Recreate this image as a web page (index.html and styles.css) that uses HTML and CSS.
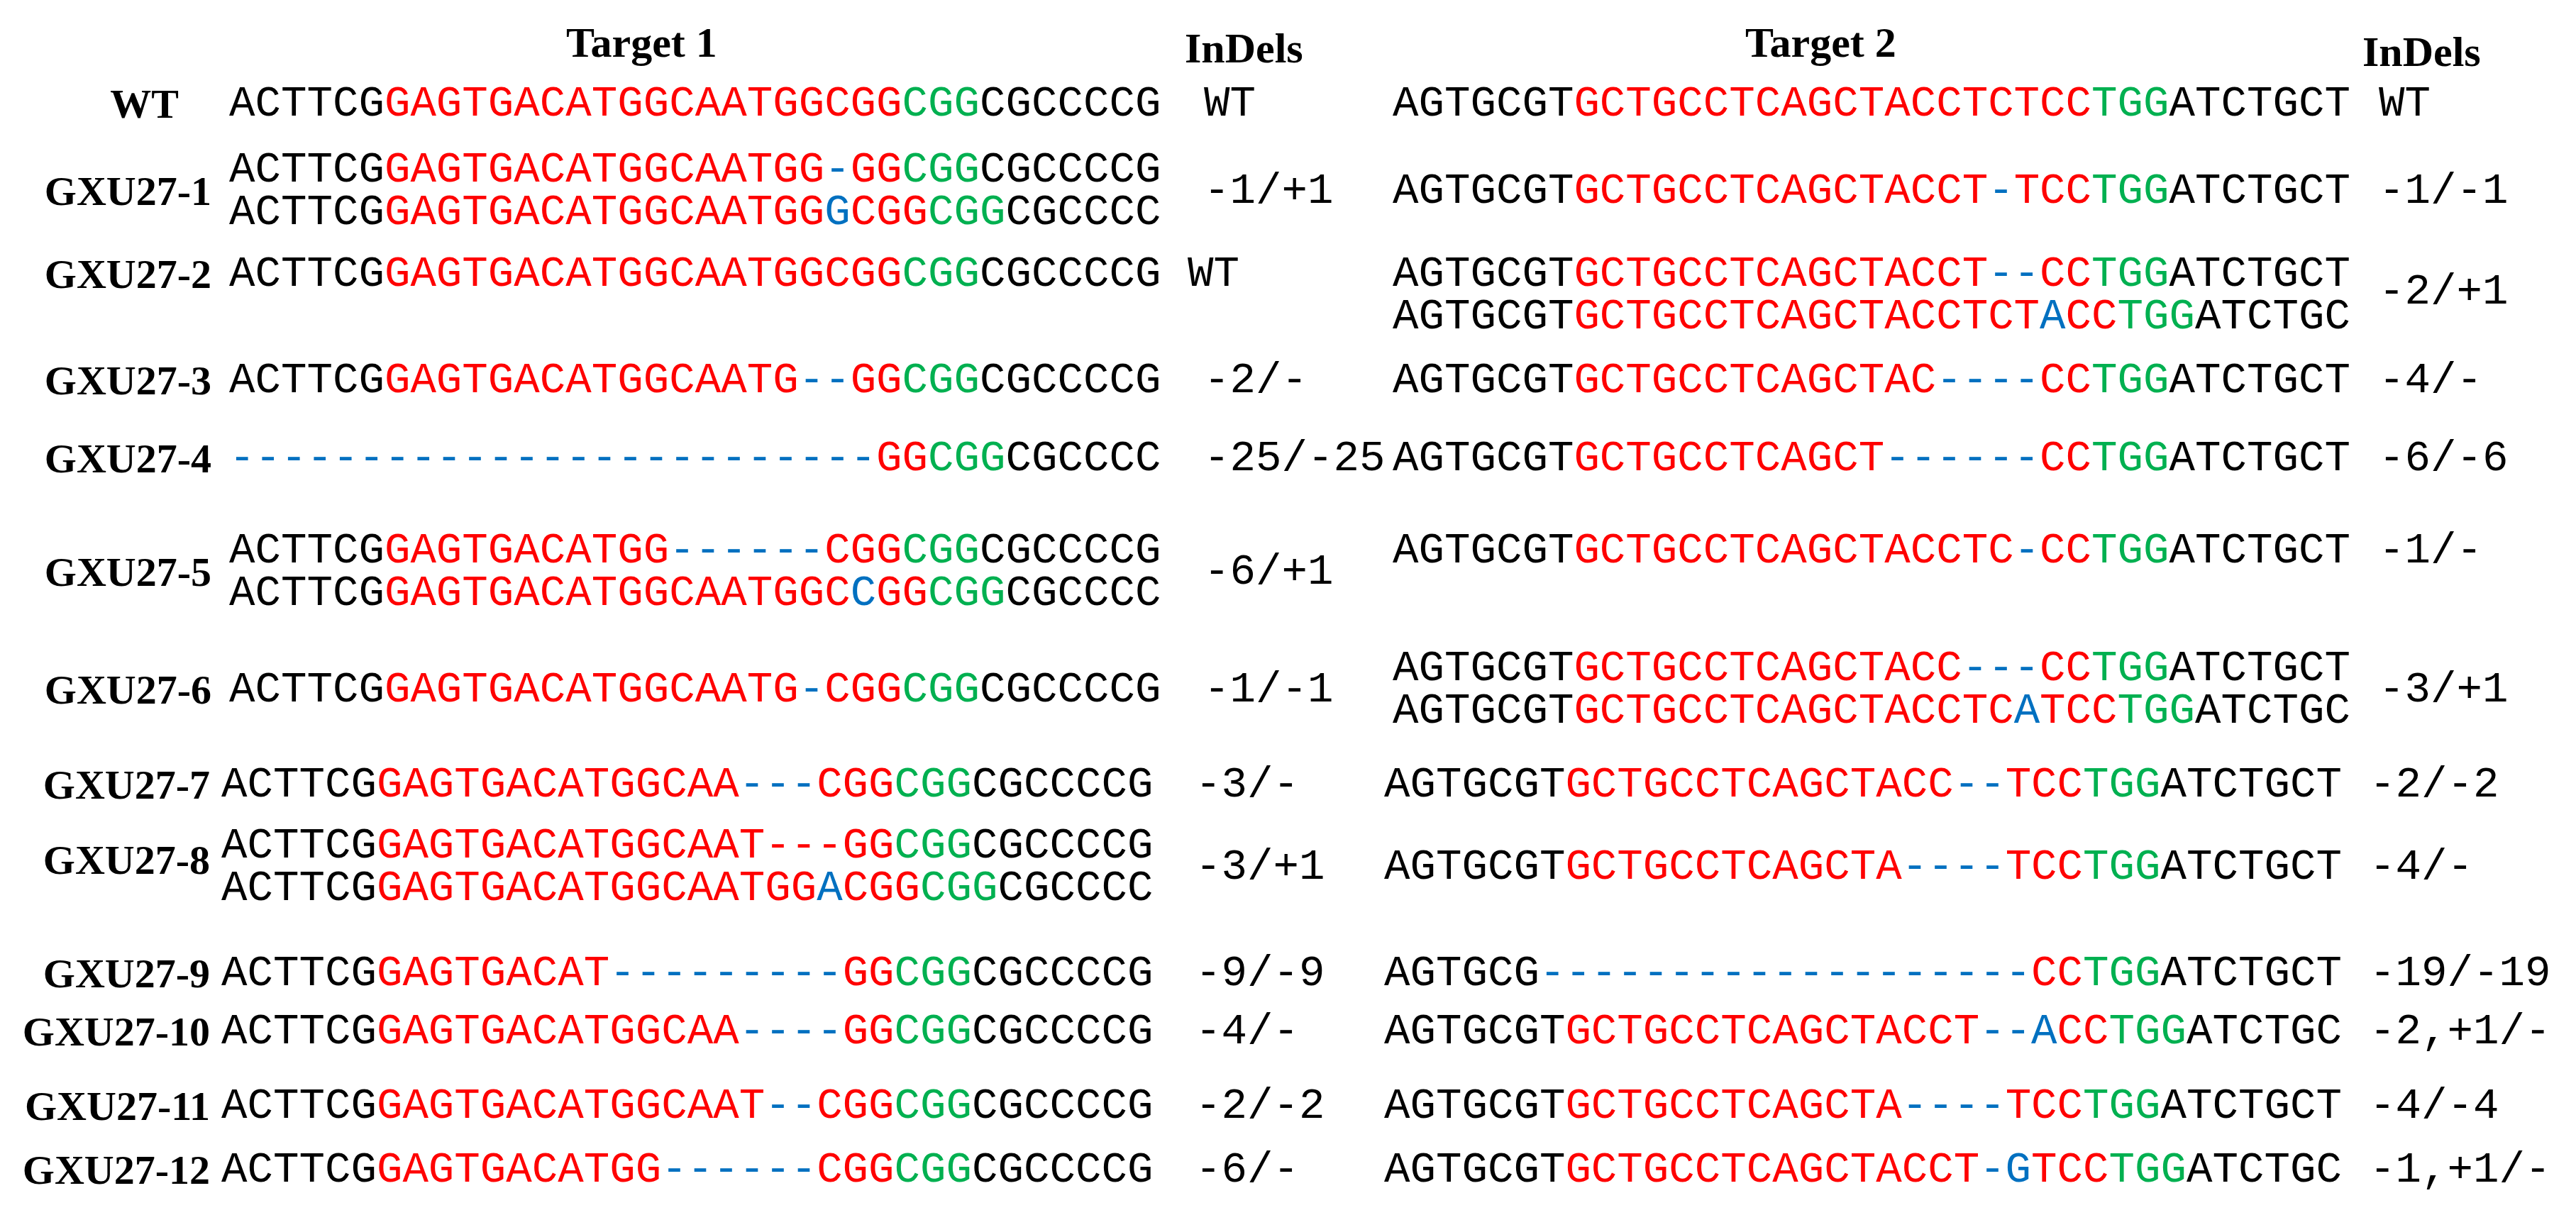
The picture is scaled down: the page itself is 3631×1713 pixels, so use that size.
FILE: index.html
```html
<!DOCTYPE html>
<html lang="en">
<head>
<meta charset="utf-8">
<title>InDels at Target 1 and Target 2</title>
<link rel="stylesheet" href="styles.css">
</head>
<body>
<div class="fig">
  <div class="head">
    <div class="h-t1">Target 1</div>
    <div class="h-in1">InDels</div>
    <div class="h-t2">Target 2</div>
    <div class="h-in2">InDels</div>
  </div>

  <div class="row m-wt">
    <div class="label wt">WT</div>
    <div class="seq">ACTTCG<span class="r">GAGTGACATGGCAATGGCGG</span><span class="g">CGG</span>CGCCCCG</div>
    <div class="indel">WT</div>
    <div class="seq">AGTGCGT<span class="r">GCTGCCTCAGCTACCTCTCC</span><span class="g">TGG</span>ATCTGCT</div>
    <div class="indel">WT</div>
  </div>

  <div class="row m1">
    <div class="label">GXU27-1</div>
    <div class="seq">ACTTCG<span class="r">GAGTGACATGGCAATGG</span><span class="b">-</span><span class="r">GG</span><span class="g">CGG</span>CGCCCCG
ACTTCG<span class="r">GAGTGACATGGCAATGG</span><span class="b">G</span><span class="r">CGG</span><span class="g">CGG</span>CGCCCC</div>
    <div class="indel">-1/+1</div>
    <div class="seq">AGTGCGT<span class="r">GCTGCCTCAGCTACCT</span><span class="b">-</span><span class="r">TCC</span><span class="g">TGG</span>ATCTGCT</div>
    <div class="indel">-1/-1</div>
  </div>

  <div class="row m2">
    <div class="label">GXU27-2</div>
    <div class="seq">ACTTCG<span class="r">GAGTGACATGGCAATGGCGG</span><span class="g">CGG</span>CGCCCCG</div>
    <div class="indel pull">WT</div>
    <div class="seq drop">AGTGCGT<span class="r">GCTGCCTCAGCTACCT</span><span class="b">--</span><span class="r">CC</span><span class="g">TGG</span>ATCTGCT
AGTGCGT<span class="r">GCTGCCTCAGCTACCTCT</span><span class="b">A</span><span class="r">CC</span><span class="g">TGG</span>ATCTGC</div>
    <div class="indel half">-2/+1</div>
  </div>

  <div class="row m3">
    <div class="label">GXU27-3</div>
    <div class="seq">ACTTCG<span class="r">GAGTGACATGGCAATG</span><span class="b">--</span><span class="r">GG</span><span class="g">CGG</span>CGCCCCG</div>
    <div class="indel">-2/-</div>
    <div class="seq">AGTGCGT<span class="r">GCTGCCTCAGCTAC</span><span class="b">----</span><span class="r">CC</span><span class="g">TGG</span>ATCTGCT</div>
    <div class="indel">-4/-</div>
  </div>

  <div class="row m4">
    <div class="label">GXU27-4</div>
    <div class="seq"><span class="b">-------------------------</span><span class="r">GG</span><span class="g">CGG</span>CGCCCC</div>
    <div class="indel">-25/-25</div>
    <div class="seq">AGTGCGT<span class="r">GCTGCCTCAGCT</span><span class="b">------</span><span class="r">CC</span><span class="g">TGG</span>ATCTGCT</div>
    <div class="indel">-6/-6</div>
  </div>

  <div class="row m5">
    <div class="label">GXU27-5</div>
    <div class="seq">ACTTCG<span class="r">GAGTGACATGG</span><span class="b">------</span><span class="r">CGG</span><span class="g">CGG</span>CGCCCCG
ACTTCG<span class="r">GAGTGACATGGCAATGGC</span><span class="b">C</span><span class="r">GG</span><span class="g">CGG</span>CGCCCC</div>
    <div class="indel">-6/+1</div>
    <div class="seq lift">AGTGCGT<span class="r">GCTGCCTCAGCTACCTC</span><span class="b">-</span><span class="r">CC</span><span class="g">TGG</span>ATCTGCT</div>
    <div class="indel lift">-1/-</div>
  </div>

  <div class="row m6">
    <div class="label">GXU27-6</div>
    <div class="seq">ACTTCG<span class="r">GAGTGACATGGCAATG</span><span class="b">-</span><span class="r">CGG</span><span class="g">CGG</span>CGCCCCG</div>
    <div class="indel">-1/-1</div>
    <div class="seq">AGTGCGT<span class="r">GCTGCCTCAGCTACC</span><span class="b">---</span><span class="r">CC</span><span class="g">TGG</span>ATCTGCT
AGTGCGT<span class="r">GCTGCCTCAGCTACCTC</span><span class="b">A</span><span class="r">TCC</span><span class="g">TGG</span>ATCTGC</div>
    <div class="indel">-3/+1</div>
  </div>

  <div class="row shift m7">
    <div class="label">GXU27-7</div>
    <div class="seq">ACTTCG<span class="r">GAGTGACATGGCAA</span><span class="b">---</span><span class="r">CGG</span><span class="g">CGG</span>CGCCCCG</div>
    <div class="indel">-3/-</div>
    <div class="seq">AGTGCGT<span class="r">GCTGCCTCAGCTACC</span><span class="b">--</span><span class="r">TCC</span><span class="g">TGG</span>ATCTGCT</div>
    <div class="indel">-2/-2</div>
  </div>

  <div class="row shift m8">
    <div class="label up">GXU27-8</div>
    <div class="seq">ACTTCG<span class="r">GAGTGACATGGCAAT---GG</span><span class="g">CGG</span>CGCCCCG
ACTTCG<span class="r">GAGTGACATGGCAATGG</span><span class="b">A</span><span class="r">CGG</span><span class="g">CGG</span>CGCCCC</div>
    <div class="indel">-3/+1</div>
    <div class="seq">AGTGCGT<span class="r">GCTGCCTCAGCTA</span><span class="b">----</span><span class="r">TCC</span><span class="g">TGG</span>ATCTGCT</div>
    <div class="indel">-4/-</div>
  </div>

  <div class="row shift m9">
    <div class="label">GXU27-9</div>
    <div class="seq">ACTTCG<span class="r">GAGTGACAT</span><span class="b">---------</span><span class="r">GG</span><span class="g">CGG</span>CGCCCCG</div>
    <div class="indel">-9/-9</div>
    <div class="seq">AGTGCG<span class="b">-------------------</span><span class="r">CC</span><span class="g">TGG</span>ATCTGCT</div>
    <div class="indel">-19/-19</div>
  </div>

  <div class="row shift m10">
    <div class="label">GXU27-10</div>
    <div class="seq">ACTTCG<span class="r">GAGTGACATGGCAA</span><span class="b">----</span><span class="r">GG</span><span class="g">CGG</span>CGCCCCG</div>
    <div class="indel">-4/-</div>
    <div class="seq">AGTGCGT<span class="r">GCTGCCTCAGCTACCT</span><span class="b">--A</span><span class="r">CC</span><span class="g">TGG</span>ATCTGC</div>
    <div class="indel">-2,+1/-</div>
  </div>

  <div class="row shift m11">
    <div class="label">GXU27-11</div>
    <div class="seq">ACTTCG<span class="r">GAGTGACATGGCAAT</span><span class="b">--</span><span class="r">CGG</span><span class="g">CGG</span>CGCCCCG</div>
    <div class="indel">-2/-2</div>
    <div class="seq">AGTGCGT<span class="r">GCTGCCTCAGCTA</span><span class="b">----</span><span class="r">TCC</span><span class="g">TGG</span>ATCTGCT</div>
    <div class="indel">-4/-4</div>
  </div>

  <div class="row shift m12">
    <div class="label">GXU27-12</div>
    <div class="seq">ACTTCG<span class="r">GAGTGACATGG</span><span class="b">------</span><span class="r">CGG</span><span class="g">CGG</span>CGCCCCG</div>
    <div class="indel">-6/-</div>
    <div class="seq">AGTGCGT<span class="r">GCTGCCTCAGCTACCT</span><span class="b">-G</span><span class="r">TCC</span><span class="g">TGG</span>ATCTGC</div>
    <div class="indel">-1,+1/-</div>
  </div>
</div>
</body>
</html>
```

FILE: styles.css
```css
html, body {
  margin: 0;
  padding: 0;
  background: #ffffff;
}

body {
  width: 3631px;
  height: 1713px;
  overflow: hidden;
  color: #000000;
}

*, *::before, *::after {
  box-sizing: border-box;
}

.fig {
  padding-top: 30px;
}

/* header */
.head {
  display: flex;
  height: 60px;
  align-items: flex-start;
  font: bold 60px/60px "Liberation Serif", "Times New Roman", serif;
  white-space: nowrap;
}

.h-t1 {
  flex: none;
  width: 1670px;
  padding-left: 798px;
}

.h-in1 {
  flex: none;
  width: 293px;
  padding-top: 8px;
}

.h-t2 {
  flex: none;
  width: 1367px;
  padding-left: 497px;
}

.h-in2 {
  flex: none;
  padding-top: 13px;
}

/* rows */
.row {
  display: flex;
  height: 60px;
  align-items: center;
}

.row > * {
  flex: none;
}

.row > :nth-child(1) { width: 323px; }
.row > :nth-child(2) { width: 1374px; }
.row > :nth-child(3) { width: 266px; }
.row > :nth-child(4) { width: 1390px; }
.row > :nth-child(5) { flex: 1 1 auto; }

.row.shift > :nth-child(1) { width: 312px; }
.row.shift > :nth-child(2) { width: 1373px; }
.row.shift > :nth-child(4) { width: 1389px; }

.label {
  font: bold 58px/60px "Liberation Serif", "Times New Roman", serif;
  text-align: right;
  padding-right: 25px;
  white-space: nowrap;
}

.label.wt {
  padding-right: 71px;
}

.shift .label {
  padding-right: 16px;
}

.label.up {
  margin-bottom: 20px;
}

.seq,
.indel {
  font: 60.8px/60px "Liberation Mono", "Courier New", monospace;
  white-space: pre;
}

.indel.pull {
  text-indent: -23px;
}

/* block whose first line sits on the row centre */
.drop {
  padding-top: 60px;
}

/* value between the two lines of a dropped block */
.half {
  padding-top: 50px;
}

/* single line aligned with the first of two lines */
.lift {
  padding-bottom: 60px;
}

/* colours */
.r { color: #ff0000; }
.g { color: #00b050; }
.b { color: #0070c0; }

/* vertical rhythm */
.m-wt { margin-top: 27px; }
.m1 { margin-top: 63px; }
.m2 { margin-top: 57px; }
.m3 { margin-top: 90px; }
.m4 { margin-top: 50px; }
.m5 { margin-top: 100px; }
.m6 { margin-top: 106px; }
.m7 { margin-top: 74px; }
.m8 { margin-top: 56px; }
.m9 { margin-top: 90px; }
.m10 { margin-top: 22px; }
.m11 { margin-top: 45px; }
.m12 { margin-top: 30px; }
```
